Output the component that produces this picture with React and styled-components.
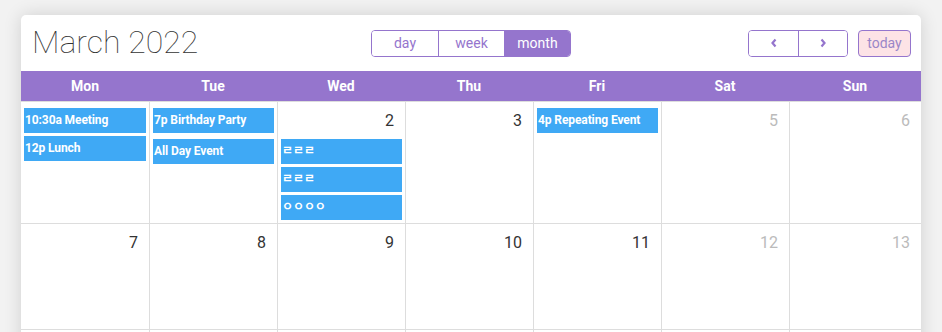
import React from 'react';
import styled, { createGlobalStyle } from 'styled-components';

// ---------- global ----------
const GlobalStyle = createGlobalStyle`
  html, body {
    margin: 0;
    padding: 0;
    background: #f2f2f2;
    font-family: Roboto, "Noto Sans CJK KR", "Liberation Sans", sans-serif;
  }
`;

const PURPLE = '#9575cd';
const BLUE = '#3fa9f5';
const LINE = '#dddddd';

// ---------- card + toolbar ----------
const Card = styled.div`
  margin: 15px 21px 0;
  width: 900px;
  background: #fff;
  border-radius: 5px 5px 0 0;
  box-shadow: 0 0 18px rgba(0, 0, 0, 0.14);
  overflow: hidden;
`;

const Toolbar = styled.div`
  display: grid;
  grid-template-columns: 1fr auto 1fr;
  align-items: center;
  height: 56px;
  padding: 0 10px 0 10px;
`;

const Title = styled.h1`
  margin: 0;
  padding: 0 0 2px 1px;
  font-size: 32px;
  font-weight: 100;
  line-height: 1;
  color: #333;
`;

const Group = styled.div`
  display: flex;
  border: 1px solid ${PURPLE};
  border-radius: 4px;
  overflow: hidden;
  height: 25px;
`;

const ViewButton = styled.button`
  width: ${p => p.$w}px;
  border: 0;
  border-left: ${p => (p.$first ? '0' : `1px solid ${PURPLE}`)};
  background: ${p => (p.$active ? PURPLE : '#fff')};
  color: ${p => (p.$active ? '#fff' : PURPLE)};
  font-family: inherit;
  font-size: 14px;
  padding: 0;
  cursor: pointer;
`;

const Right = styled.div`
  display: flex;
  justify-content: flex-end;
  gap: 10px;
`;

const NavButton = styled(ViewButton)`
  display: flex;
  align-items: center;
  justify-content: center;
`;

const TodayButton = styled.button`
  height: 27px;
  width: 53px;
  border: 1px solid ${PURPLE};
  border-radius: 4px;
  background: #fde3e6;
  color: #9a86c8;
  font-family: inherit;
  font-size: 14px;
  padding: 0;
`;

// ---------- grid ----------
const Cols = styled.div`
  display: grid;
  grid-template-columns: repeat(6, 128px) 1fr;
`;

const HeadRow = styled(Cols)`
  background: ${PURPLE};
  height: 30px;
  border-bottom: 1px solid ${LINE};
`;

const HeadCell = styled.div`
  display: flex;
  align-items: center;
  justify-content: center;
  color: #fff;
  font-weight: 700;
  font-size: 14px;
`;

const WeekRow = styled(Cols)`
  min-height: ${p => p.$h}px;
  border-bottom: 1px solid ${LINE};
`;

const DayCell = styled.div`
  display: flex;
  flex-direction: column;
  padding: 6px 0 3px;
  border-left: ${p => (p.$first ? '0' : `1px solid ${LINE}`)};
`;

const DayNum = styled.div`
  height: 28px;
  box-sizing: border-box;
  padding: 3px 11px 0 0;
  text-align: right;
  font-size: 16px;
  line-height: 20px;
  color: ${p => (p.$muted ? '#bbb' : '#333')};
`;

const Event = styled.div`
  height: 25px;
  margin: ${p => p.$mt}px 3px 0 3px;
  padding-left: 1px;
  background: ${BLUE};
  color: #fff;
  font-size: 12px;
  font-weight: 700;
  line-height: 24px;
  letter-spacing: -0.1px;
  white-space: nowrap;
  overflow: hidden;
`;

const Chevron = ({ dir }) => (
  <svg width="8" height="10" viewBox="0 0 8 10">
    <path
      d={dir === 'left' ? 'M5.5 1.5 L2.5 5 L5.5 8.5' : 'M2.5 1.5 L5.5 5 L2.5 8.5'}
      fill="none"
      stroke={PURPLE}
      strokeWidth="2.2"
    />
  </svg>
);

const days = ['Mon', 'Tue', 'Wed', 'Thu', 'Fri', 'Sat', 'Sun'];

const week1 = [
  { events: [{ t: '10:30a Meeting', mt: 0 }, { t: '12p Lunch', mt: 3 }] },
  { events: [{ t: '7p Birthday Party', mt: 0 }, { t: 'All Day Event', mt: 6 }] },
  { num: 2, events: [{ t: 'ㄹㄹㄹ', mt: 3 }, { t: 'ㄹㄹㄹ', mt: 3 }, { t: 'ㅇㅇㅇㅇ', mt: 3 }] },
  { num: 3, events: [] },
  { events: [{ t: '4p Repeating Event', mt: 0 }] },
  { num: 5, muted: true, events: [] },
  { num: 6, muted: true, events: [] },
];

const week2 = [7, 8, 9, 10, 11, 12, 13].map((n, i) => ({ num: n, muted: i > 4, events: [] }));

function Week({ cells, h }) {
  return (
    <WeekRow $h={h}>
      {cells.map((c, i) => (
        <DayCell key={i} $first={i === 0}>
          {c.num && <DayNum $muted={c.muted}>{c.num}</DayNum>}
          {c.events.map((e, j) => (
            <Event key={j} $mt={e.mt}>{e.t}</Event>
          ))}
        </DayCell>
      ))}
    </WeekRow>
  );
}

export default function App() {
  return (
    <>
      <GlobalStyle />
      <Card>
        <Toolbar>
          <Title>March 2022</Title>
          <Group>
            <ViewButton $first $w={66}>day</ViewButton>
            <ViewButton $w={66}>week</ViewButton>
            <ViewButton $active $w={66}>month</ViewButton>
          </Group>
          <Right>
            <Group>
              <NavButton $first $w={49}><Chevron dir="left" /></NavButton>
              <NavButton $w={49}><Chevron dir="right" /></NavButton>
            </Group>
            <TodayButton>today</TodayButton>
          </Right>
        </Toolbar>
        <HeadRow>
          {days.map(d => <HeadCell key={d}>{d}</HeadCell>)}
        </HeadRow>
        <Week cells={week1} h={121} />
        <Week cells={week2} h={105} />
        <Week cells={week2.map(c => ({ ...c, num: null }))} h={105} />
      </Card>
    </>
  );
}
